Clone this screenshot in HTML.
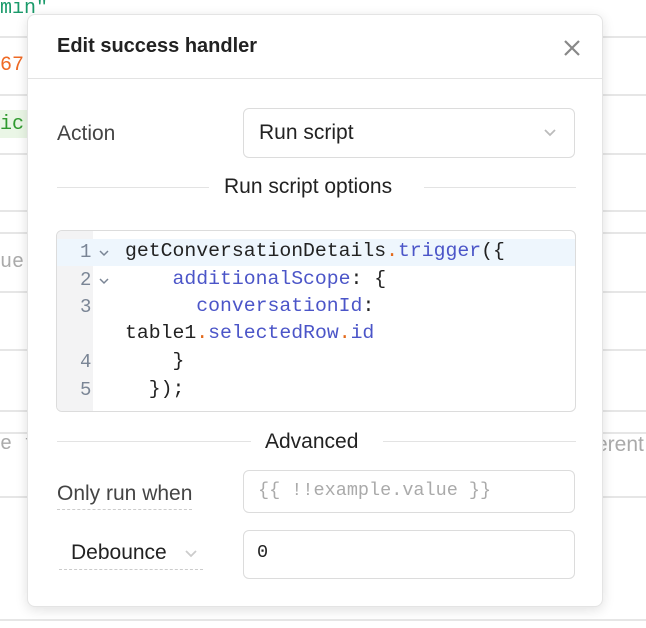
<!DOCTYPE html>
<html><head><meta charset="utf-8"><style>
*{box-sizing:border-box;margin:0;padding:0}
body{width:646px;height:628px;background:#fff;position:relative;overflow:hidden;font-family:"Liberation Sans",sans-serif}
.ln{position:absolute;left:0;right:0;height:2px;background:#e6e6e6}
.bt{position:absolute;font-family:"Liberation Mono",monospace;font-size:20px}
.modal{position:absolute;left:27px;top:14px;width:576px;height:593px;background:#fff;border-radius:8px;border:1px solid #e4e4e4;box-shadow:0 3px 12px rgba(0,0,0,.12)}
.t{position:absolute;color:#222}
.sep{position:absolute;height:1px;background:#e3e3e3}
.box{position:absolute;border:1px solid #dcdcdc;border-radius:6px;background:#fff}
.code{font-family:"Liberation Mono",monospace;font-size:19.8px;color:#222;position:absolute;white-space:pre}
.num{font-family:"Liberation Mono",monospace;font-size:19px;color:#7a8595;position:absolute}
.b{color:#4b55c8}.o{color:#e36a1c}
</style></head><body>
<div class="ln" style="top:36px"></div><div class="ln" style="top:94px"></div><div class="ln" style="top:153px"></div><div class="ln" style="top:210px"></div><div class="ln" style="top:232px"></div><div class="ln" style="top:291px"></div><div class="ln" style="top:349px"></div><div class="ln" style="top:410px"></div><div class="ln" style="top:432px"></div><div class="ln" style="top:496px"></div><div class="ln" style="top:619px"></div>
<div class="bt" style="left:0;top:-3px;color:#1a9a6a">min"</div>
<div class="bt" style="left:0;top:54px;color:#ef6a25">67</div>
<div style="position:absolute;left:0;top:110px;width:30px;height:28px;background:#eaf6e6"></div>
<div class="bt" style="left:0;top:113px;color:#2f9a2f">ic</div>
<div class="bt" style="left:0;top:251px;color:#aaa">ue</div>
<div class="bt" style="left:0;top:433px;color:#aaa">e t</div>
<div class="bt" style="left:596px;top:433px;color:#aaa;font-family:'Liberation Sans';font-size:21px">erent</div>
<div class="modal">
 <div class="t" style="left:29px;top:20px;font-size:20px;font-weight:bold">Edit success handler</div>
 <svg style="position:absolute;left:535px;top:24px" width="18" height="18"><path d="M2 2L16 16M16 2L2 16" stroke="#888" stroke-width="2.2"/></svg>
 <div class="sep" style="left:0;right:0;top:63px"></div>
 <div class="t" style="left:29px;top:107px;font-size:21px;color:#444">Action</div>
 <div class="box" style="left:215px;top:93px;width:332px;height:50px"></div>
 <div class="t" style="left:231px;top:106px;font-size:21px">Run script</div>
 <svg style="position:absolute;left:516px;top:114px" width="12" height="8"><path d="M1 1L6 6L11 1" stroke="#bbb" stroke-width="1.8" fill="none"/></svg>
 <div class="sep" style="left:29px;width:152px;top:172px"></div>
 <div class="sep" style="left:396px;width:152px;top:172px"></div>
 <div class="t" style="left:196px;top:160px;font-size:21px">Run script options</div>
 <div class="box" style="left:28px;top:215px;width:520px;height:182px;overflow:hidden">
  <div style="position:absolute;left:0;top:0;width:36px;height:100%;background:#f3f3f4"></div>
  <div style="position:absolute;left:0;top:8px;width:100%;height:27px;background:#eef6fd"></div>
  <div class="num" style="left:23px;top:10px">1</div><div class="num" style="left:23px;top:38px">2</div><div class="num" style="left:23px;top:65px">3</div><div class="num" style="left:23px;top:120px">4</div><div class="num" style="left:23px;top:148px">5</div>
  <svg style="position:absolute;left:42px;top:19px" width="10" height="7"><path d="M1 1L5 5L9 1" stroke="#7a8595" stroke-width="1.5" fill="none"/></svg>
  <svg style="position:absolute;left:42px;top:47px" width="10" height="7"><path d="M1 1L5 5L9 1" stroke="#7a8595" stroke-width="1.5" fill="none"/></svg>
  <div class="code" style="left:68px;top:9px">getConversationDetails<span class="o">.</span><span class="b">trigger</span>({</div>
  <div class="code" style="left:68px;top:37px">    <span class="b">additionalScope</span>: {</div>
  <div class="code" style="left:68px;top:64px">      <span class="b">conversationId</span>:</div>
  <div class="code" style="left:68px;top:91px">table1<span class="o">.</span><span class="b">selectedRow</span><span class="o">.</span><span class="b">id</span></div>
  <div class="code" style="left:68px;top:119px">    }</div>
  <div class="code" style="left:68px;top:147px">  });</div>
 </div>
 <div class="sep" style="left:29px;width:194px;top:426px"></div>
 <div class="sep" style="left:355px;width:193px;top:426px"></div>
 <div class="t" style="left:237px;top:415px;font-size:21px">Advanced</div>
 <div class="t" style="left:29px;top:467px;font-size:21px;color:#444;border-bottom:1.5px dashed #ccc;padding-bottom:3px">Only run when</div>
 <div class="box" style="left:215px;top:455px;width:332px;height:43px"></div>
 <div class="code" style="left:230px;top:465px;color:#aaa;font-size:18.5px">{{ !!example.value }}</div>
 <div class="t" style="left:31px;top:525px;width:144px;height:30px;border-bottom:1.5px dashed #ccc"></div>
 <div class="t" style="left:43px;top:526px;font-size:21px">Debounce</div>
 <svg style="position:absolute;left:157px;top:535px" width="12" height="8"><path d="M1 1L6 6L11 1" stroke="#ccc" stroke-width="1.8" fill="none"/></svg>
 <div class="box" style="left:215px;top:515px;width:332px;height:49px;border-width:1.5px"></div>
 <div class="code" style="left:229px;top:527px;font-size:18.5px">0</div>
</div>
</body></html>
